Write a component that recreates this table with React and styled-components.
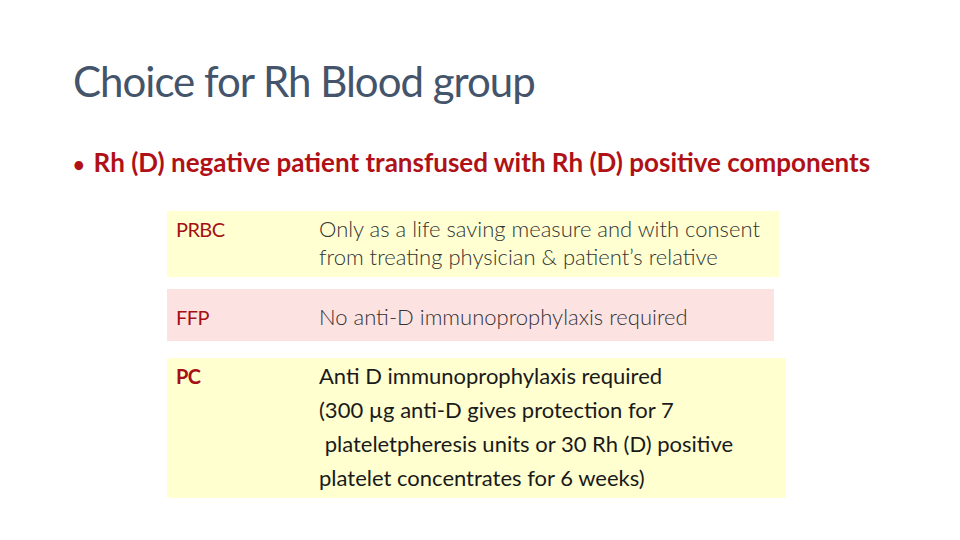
import React from "react";
import styled, { createGlobalStyle } from "styled-components";

const GlobalStyle = createGlobalStyle`
  html, body {
    margin: 0;
    padding: 0;
    background: #ffffff;
  }
`;

const Slide = styled.div`
  width: 960px;
  height: 540px;
  box-sizing: border-box;
  padding: 55px 0 0 73px;
  background: #ffffff;
  font-family: Lato, "Liberation Sans", sans-serif;
  overflow: hidden;
`;

const Title = styled.h1`
  margin: 0;
  font-size: 42px;
  font-weight: 400;
  line-height: 52px;
  color: #44546a;
  letter-spacing: -1px;
`;

const Bullet = styled.div`
  display: flex;
  align-items: baseline;
  gap: 9px;
  margin-top: 40px;
  font-size: 26px;
  font-weight: 700;
  line-height: 30px;
  color: #b01116;
`;

const Dot = styled.span`
  font-size: 20px;
`;

const Table = styled.div`
  display: flex;
  flex-direction: column;
  align-items: flex-start;
  margin: 32px 0 0 94px;
`;

const Row = styled.div`
  display: flex;
  box-sizing: border-box;
  width: ${(p) => p.$width}px;
  margin-top: ${(p) => p.$gap || 0}px;
  padding: ${(p) => p.$pad};
  background: ${(p) => p.$bg};
`;

const Label = styled.div`
  flex: 0 0 143px;
  font-size: 20px;
  line-height: ${(p) => p.$lh}px;
  font-weight: ${(p) => (p.$bold ? 700 : 400)};
  letter-spacing: -0.6px;
  color: #a50f15;
`;

const Desc = styled.div`
  font-size: 22px;
  line-height: ${(p) => p.$lh}px;
  font-weight: ${(p) => (p.$light ? 300 : 400)};
  color: ${(p) => (p.$light ? "#333333" : "#1a1a1a")};
  white-space: pre;
`;

export default function App() {
  return (
    <>
      <GlobalStyle />
      <Slide>
        <Title>Choice for Rh Blood group</Title>
        <Bullet>
          <Dot>•</Dot>
          <span>Rh (D) negative patient transfused with Rh (D) positive components</span>
        </Bullet>
        <Table>
          <Row $width={612} $bg="#ffffd2" $pad="4px 0 6px 9px">
            <Label $lh={28}>PRBC</Label>
            <Desc $lh={28} $light>
              {"Only as a life saving measure and with consent\nfrom treating physician & patient’s relative"}
            </Desc>
          </Row>
          <Row $width={607} $gap={12} $bg="#fde2e2" $pad="14px 0 10px 9px">
            <Label $lh={28}>FFP</Label>
            <Desc $lh={28} $light>
              No anti-D immunoprophylaxis required
            </Desc>
          </Row>
          <Row $width={619} $gap={17} $bg="#ffffd0" $pad="1px 0 3px 9px">
            <Label $lh={34} $bold>
              PC
            </Label>
            <Desc $lh={34}>
              {"Anti D immunoprophylaxis required\n(300 µg anti-D gives protection for 7\n plateletpheresis units or 30 Rh (D) positive\nplatelet concentrates for 6 weeks)"}
            </Desc>
          </Row>
        </Table>
      </Slide>
    </>
  );
}
